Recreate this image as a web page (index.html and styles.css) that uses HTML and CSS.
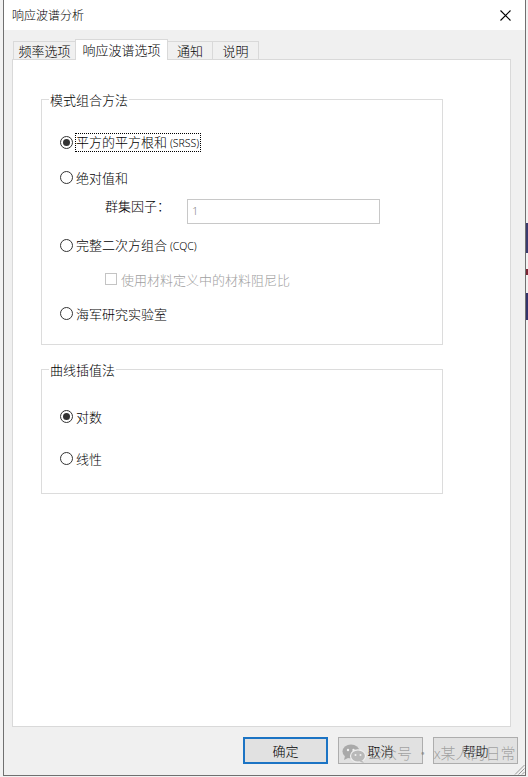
FILE: index.html
```html
<!DOCTYPE html>
<html lang="zh-CN">
<head>
<meta charset="utf-8">
<title>响应波谱分析</title>
<link rel="stylesheet" href="styles.css">
</head>
<body>
<div class="desk-strip"></div>
<div class="window">
  <div class="titlebar">
    <span class="title">响应波谱分析</span>
    <svg class="close" width="11" height="11" viewBox="0 0 11 11"><path d="M0.5 0.5 L10.5 10.5 M10.5 0.5 L0.5 10.5" stroke="#000" stroke-width="1.1" fill="none"/></svg>
  </div>
  <div class="client">
    <div class="tabs">
      <div class="tab t1">频率选项</div>
      <div class="tab active">响应波谱选项</div>
      <div class="tab t3">通知</div>
      <div class="tab t4">说明</div>
    </div>
    <div class="panel">
      <div class="group g1">
        <div class="legend">模式组合方法</div>
        <div class="opts">
          <div class="opt"><span class="radio checked"></span><span class="focus">平方的平方根和 <span class="latin">(SRSS)</span></span></div>
          <div class="opt abs"><span class="radio"></span><span class="text">绝对值和</span></div>
          <div class="cluster"><span class="cl-label">群集因子：</span><div class="field">1</div></div>
          <div class="opt cqc"><span class="radio"></span><span class="text">完整二次方组合 <span class="latin">(CQC)</span></span></div>
          <div class="opt damp"><span class="check"></span><span class="text disabled">使用材料定义中的材料阻尼比</span></div>
          <div class="opt nrl"><span class="radio"></span><span class="text">海军研究实验室</span></div>
        </div>
      </div>
      <div class="group g2">
        <div class="legend">曲线插值法</div>
        <div class="opts">
          <div class="opt"><span class="radio checked"></span><span class="text">对数</span></div>
          <div class="opt lin"><span class="radio"></span><span class="text">线性</span></div>
        </div>
      </div>
    </div>
    <div class="buttons">
      <div class="btn default">确定</div>
      <div class="btn">取消</div>
      <div class="btn">帮助</div>
    </div>
  </div>
  <div class="watermark">
    <svg width="24" height="19" viewBox="0 0 24 19">
      <ellipse cx="9" cy="7.5" rx="8.5" ry="7" fill="#a9a9a9"/>
      <path d="M3 12 L2 16 L7 13.5 Z" fill="#a9a9a9"/>
      <ellipse cx="16" cy="12" rx="7.5" ry="6.2" fill="#b9b9b9" stroke="#f0f0f0" stroke-width="1.2"/>
      <path d="M20 16.5 L22 19 L17.5 17.5 Z" fill="#b9b9b9"/>
      <circle cx="6" cy="6" r="1.2" fill="#f0f0f0"/>
      <circle cx="11.5" cy="6" r="1.2" fill="#f0f0f0"/>
      <circle cx="13.5" cy="11" r="1" fill="#f0f0f0"/>
      <circle cx="18.5" cy="11" r="1" fill="#f0f0f0"/>
    </svg>
    <span class="wm-text">公众号 · x某人的日常</span>
  </div>
  <svg class="grip" width="11" height="11" viewBox="0 0 11 11">
    <path d="M10.5 1 L1 10.5 M10.5 4.5 L4.5 10.5 M10.5 8 L8 10.5" stroke="#9a9a9a" stroke-width="1" fill="none"/>
  </svg>
</div>
</body>
</html>
```
FILE: styles.css
```css
* { box-sizing: border-box; }
html, body {
  margin: 0;
  padding: 0;
  background: #f2f2f2;
}
body {
  font-family: "Noto Sans CJK SC", "Microsoft YaHei", sans-serif;
  font-size: 13px;
  font-weight: 300;
  color: #000;
  position: relative;
}
.desk-strip {
  position: absolute;
  left: 526px;
  top: 223px;
  width: 2px;
  height: 100px;
  background: linear-gradient(to bottom, #3b3b6e 0 30px, transparent 30px 46px, #7a2535 46px 52px, transparent 52px 70px, #33336b 70px 97px, transparent 97px);
}
.window {
  position: relative;
  margin-left: 3px;
  width: 523px;
  height: 776px;
  border: 1px solid #707070;
  border-top: none;
  background: #f0f0f0;
  display: flex;
  flex-direction: column;
}
.titlebar {
  height: 30px;
  flex: none;
  background: #fff;
  display: flex;
  align-items: center;
  justify-content: space-between;
  padding: 0 14px 0 8px;
}
.title {
  font-size: 12px;
  line-height: 16px;
}
.close { display: block; margin-top: 1px; }
.client {
  flex: 1;
  padding: 9px 7px 0 8px;
  display: flex;
  flex-direction: column;
}
.tabs {
  height: 20px;
  display: flex;
  align-items: flex-end;
  padding-left: 1px;
  margin-right: 7px;
}
.tab {
  height: 18px;
  border: 1px solid #d9d9d9;
  border-bottom: none;
  background: #f0f0f0;
  margin-right: -1px;
  text-align: center;
  line-height: 17px;
  font-size: 13px;
}
.t1 { width: 63px; }
.t3 { width: 46px; }
.t4 { width: 47px; }
.tab.active {
  position: relative;
  z-index: 1;
  width: 93px;
  height: 21px;
  margin-bottom: -1px;
  background: #fff;
  line-height: 19px;
}
.panel {
  height: 668px;
  flex: none;
  margin-right: 7px;
  border: 1px solid #d9d9d9;
  background: #fff;
  padding: 39px 0 0 28px;
}
.group {
  width: 402px;
  border: 1px solid #dcdcdc;
}
.g2 { margin-top: 24px; }
.legend {
  width: fit-content;
  margin: -9px 0 0 7px;
  padding: 0 1px;
  background: #fff;
  line-height: 17px;
}
.opts {
  display: flex;
  flex-direction: column;
  padding: 24px 0 21px 18px;
}
.g2 .opts { padding: 28px 0 25px 18px; }
.opt {
  height: 20px;
  display: flex;
  align-items: center;
}
.abs { margin-top: 15px; }
.cqc { margin-top: 11px; }
.damp { margin-top: 14px; padding-left: 45px; }
.nrl { margin-top: 14px; }
.lin { margin-top: 22px; }
.radio {
  width: 13px;
  height: 13px;
  flex: none;
  border: 1px solid #333;
  border-radius: 50%;
  background: #fff;
  margin-right: 3px;
  display: flex;
  align-items: center;
  justify-content: center;
}
.radio.checked::after {
  content: "";
  width: 7px;
  height: 7px;
  border-radius: 50%;
  background: #333;
}
.text { line-height: 15px; white-space: nowrap; }
.focus {
  margin-left: -1px;
  border: 1px dotted #000;
  padding: 0 1px 0 0;
  line-height: 15px;
  white-space: nowrap;
}
.latin {
  font-family: "Noto Sans", "Open Sans", sans-serif;
  font-size: 10.5px;
}
.cluster {
  margin-top: 12px;
  height: 25px;
  display: flex;
  align-items: flex-start;
  padding-left: 45px;
}
.cl-label {
  width: 82px;
  line-height: 13px;
}
.field {
  width: 193px;
  height: 25px;
  border: 1px solid #c8c8c8;
  background: #fff;
  padding-left: 4px;
  font-family: "Noto Sans", sans-serif;
  font-size: 11px;
  line-height: 22px;
  color: #8c8c8c;
}
.check {
  width: 12px;
  height: 12px;
  flex: none;
  border: 1px solid #c4c4c4;
  background: #fff;
  margin-right: 4px;
}
.disabled { color: #a0a0a0; }
.buttons {
  margin-top: 10px;
  display: flex;
  justify-content: flex-end;
  gap: 10px;
}
.btn {
  width: 85px;
  height: 27px;
  border: 1px solid #adadad;
  background: #e1e1e1;
  text-align: center;
  line-height: 25px;
}
.btn.default {
  border: 2px solid #1c74c4;
  line-height: 23px;
}
.watermark {
  position: absolute;
  left: 338px;
  top: 743px;
  display: flex;
  align-items: center;
  gap: 1px;
  white-space: nowrap;
  pointer-events: none;
}
.wm-text {
  font-size: 15px;
  line-height: 20px;
  color: rgba(120, 120, 120, 0.62);
}
.grip {
  position: absolute;
  right: 0;
  bottom: 0;
}
```
